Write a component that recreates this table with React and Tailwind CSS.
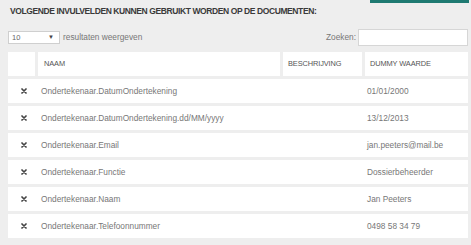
const rows = [
  { naam: "Ondertekenaar.DatumOndertekening", waarde: "01/01/2000" },
  { naam: "Ondertekenaar.DatumOndertekening.dd/MM/yyyy", waarde: "13/12/2013" },
  { naam: "Ondertekenaar.Email", waarde: "jan.peeters@mail.be" },
  { naam: "Ondertekenaar.Functie", waarde: "Dossierbeheerder" },
  { naam: "Ondertekenaar.Naam", waarde: "Jan Peeters" },
  { naam: "Ondertekenaar.Telefoonnummer", waarde: "0498 58 34 79" },
];

function Cross() {
  return (
    <svg width="6" height="6" viewBox="0 0 6 6">
      <path d="M1 1 L5 5 M5 1 L1 5" stroke="#444" strokeWidth="1.7" strokeLinecap="round" />
    </svg>
  );
}

export default function App() {
  return (
    <div className="w-[471px] h-[245px] overflow-hidden bg-[#eeeeee] font-['Liberation_Sans',Arial,sans-serif] text-[#777]">
      {/* knop bovenaan, afgesneden */}
      <div className="flex justify-end pr-[2px]">
        <div className="w-[99px] h-[3px] bg-[#1f7a72]" />
      </div>

      <div className="pl-[10px] mt-[2px] h-[12px] leading-[12px] text-[8.5px] font-bold tracking-[-0.4px] text-[#3a3a3a]">
        VOLGENDE INVULVELDEN KUNNEN GEBRUIKT WORDEN OP DE DOCUMENTEN:
      </div>

      <div className="mt-[12px] h-[17px] flex items-center justify-between pl-[8px] pr-[3px]">
        <div className="flex items-center">
          <div className="w-[52px] h-[13px] bg-white border border-[#cfcfcf] flex items-center justify-between pl-[3px] pr-[5px] text-[7.5px] text-[#666]">
            <span>10</span>
            <span className="text-[6px] text-[#444]">▼</span>
          </div>
          <span className="ml-[3px] text-[8.3px]">resultaten weergeven</span>
        </div>
        <div className="flex items-center">
          <span className="text-[8.3px] mr-[2px]">Zoeken:</span>
          <div className="w-[110px] h-[17px] bg-white border border-[#d6d6d6]" />
        </div>
      </div>

      <div className="mt-[6px] ml-[8px] w-[460px]">
        <div className="flex gap-[3px] h-[24px] text-[7.4px] text-[#555] tracking-[-0.1px]">
          <div className="w-[27px] bg-white" />
          <div className="w-[242px] bg-white flex items-center pl-[6px]">NAAM</div>
          <div className="w-[79px] bg-white flex items-center pl-[5px]">BESCHRIJVING</div>
          <div className="w-[103px] bg-white flex items-center pl-[5px]">DUMMY WAARDE</div>
        </div>

        {rows.map((r) => (
          <div key={r.naam} className="mt-[3px] h-[24px] bg-white flex items-center text-[8.3px]">
            <div className="w-[30px] flex justify-center pl-[1px]">
              <Cross />
            </div>
            <div className="w-[245px] pl-[3px]">{r.naam}</div>
            <div className="w-[81px]" />
            <div className="pl-[3px]">{r.waarde}</div>
          </div>
        ))}
      </div>
    </div>
  );
}
